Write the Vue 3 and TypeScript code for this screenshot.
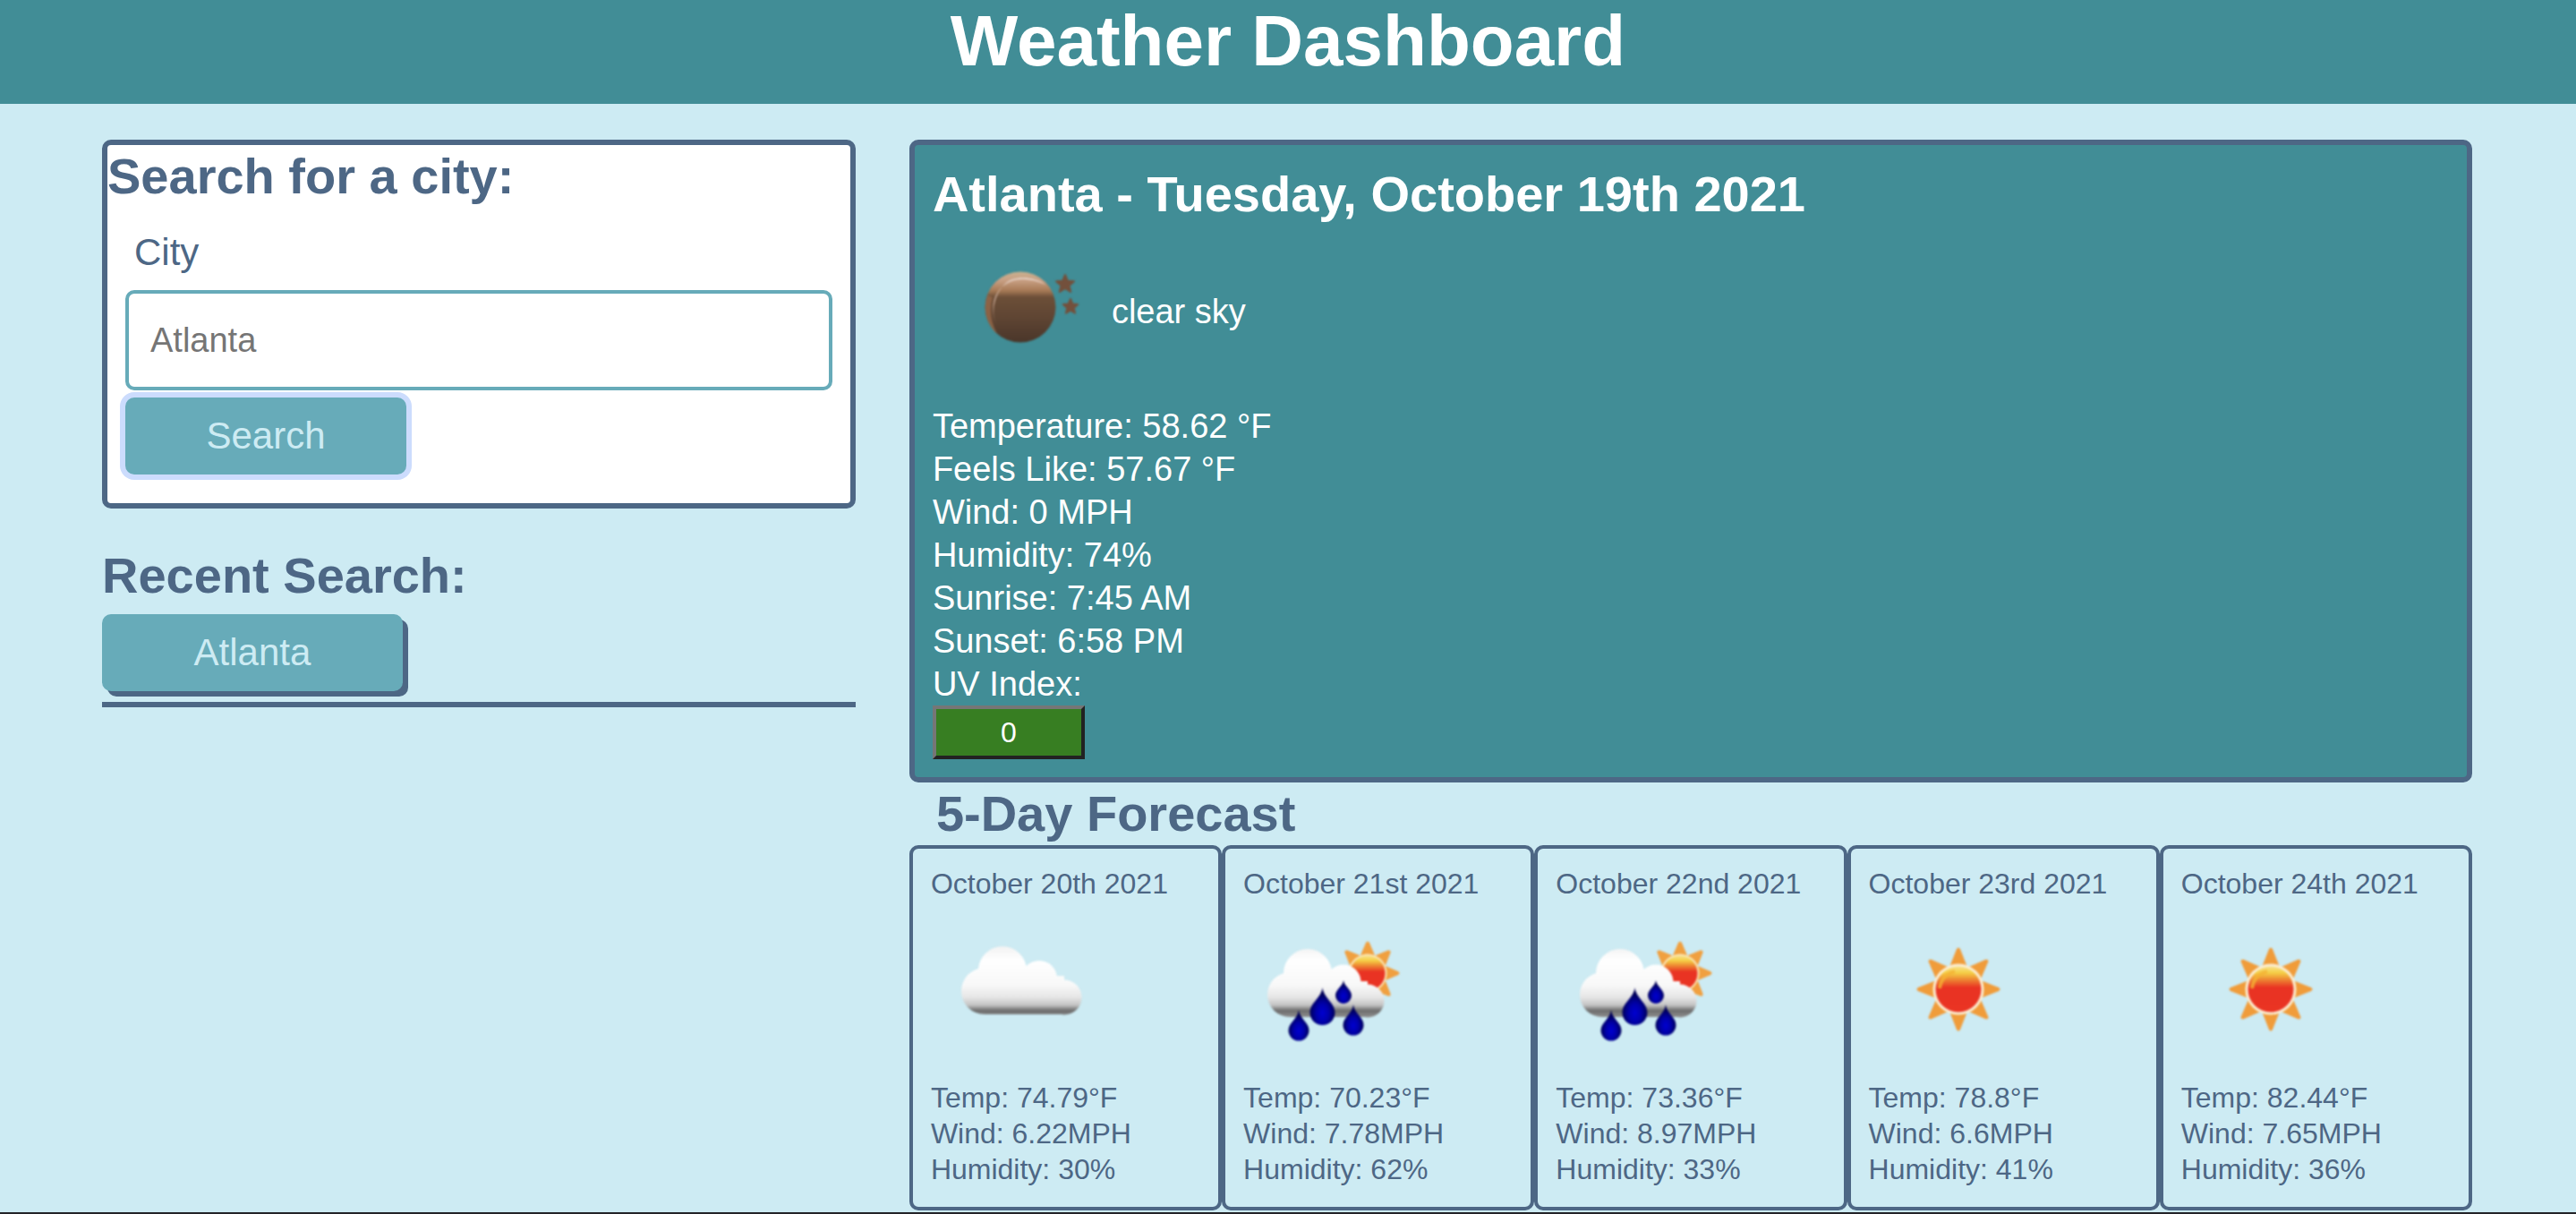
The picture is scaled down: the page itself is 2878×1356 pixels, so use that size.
<script setup lang="ts">
import { ref } from 'vue'

type Icon = 'cloud' | 'rain' | 'sun'

interface Day {
  date: string
  icon: Icon
  temp: string
  wind: string
  humidity: string
}

const city = ref('')
const recent = ref<string[]>(['Atlanta'])

const conditions: string[] = [
  'Temperature: 58.62 °F',
  'Feels Like: 57.67 °F',
  'Wind: 0 MPH',
  'Humidity: 74%',
  'Sunrise: 7:45 AM',
  'Sunset: 6:58 PM',
  'UV Index:',
]

const days: Day[] = [
  { date: 'October 20th 2021', icon: 'cloud', temp: '74.79', wind: '6.22', humidity: '30' },
  { date: 'October 21st 2021', icon: 'rain', temp: '70.23', wind: '7.78', humidity: '62' },
  { date: 'October 22nd 2021', icon: 'rain', temp: '73.36', wind: '8.97', humidity: '33' },
  { date: 'October 23rd 2021', icon: 'sun', temp: '78.8', wind: '6.6', humidity: '41' },
  { date: 'October 24th 2021', icon: 'sun', temp: '82.44', wind: '7.65', humidity: '36' },
]

const rayAngles = [0, 45, 90, 135, 180, 225, 270, 315]

function search() {
  const name = city.value.trim()
  if (name && !recent.value.includes(name)) recent.value.push(name)
}
</script>

<template>
  <div class="page">
    <header class="banner">
      <h1>Weather Dashboard</h1>
    </header>

    <main class="layout">
      <aside class="sidebar">
        <form class="search-card" @submit.prevent="search">
          <h2>Search for a city:</h2>
          <div class="fields">
            <label for="city">City</label>
            <input id="city" v-model="city" type="text" placeholder="Atlanta" autocomplete="off" />
            <button class="btn btn-search" type="submit">Search</button>
          </div>
        </form>

        <section class="recent">
          <h2>Recent Search:</h2>
          <div class="recent-list">
            <button v-for="name in recent" :key="name" class="btn btn-recent" type="button">{{ name }}</button>
          </div>
        </section>
      </aside>

      <div class="results">
        <section class="current">
          <h2>Atlanta - Tuesday, October 19th 2021</h2>
          <div class="sky">
            <svg class="icon" viewBox="0 0 200 200" aria-hidden="true">
              <defs>
                <linearGradient id="moon-body" x1="0" y1="0" x2="0" y2="1">
                  <stop offset="0" stop-color="#c9b08f" />
                  <stop offset="0.12" stop-color="#c9a084" />
                  <stop offset="0.27" stop-color="#a67955" />
                  <stop offset="0.36" stop-color="#6c4f38" />
                  <stop offset="0.65" stop-color="#5f4533" />
                  <stop offset="1" stop-color="#4a362a" />
                </linearGradient>
                <linearGradient id="moon-rim" x1="0" y1="1" x2="0.5" y2="0">
                  <stop offset="0" stop-color="#8a6247" stop-opacity="0.2" />
                  <stop offset="0.45" stop-color="#cfae9b" />
                  <stop offset="1" stop-color="#eee0d8" />
                </linearGradient>
              </defs>
              <circle cx="98" cy="91" r="39.5" fill="url(#moon-body)" />
              <path d="M61 78 A39.5 39.5 0 0 0 72 121 Q61 100 67 80Z" fill="#96694a" opacity="0.8" />
              <path d="M72 113 C62 93 68 70 88 62 C98 58 112 59 126 66 C114 57 92 56 82 64 C68 76 65 98 72 113Z" fill="url(#moon-rim)" />
              <g fill="#73503c" stroke="#73503c" stroke-width="2" stroke-linejoin="round">
                <path d="M148 55l2.800 6.700 7.200.6-5.500 4.700 1.700 7-6.200-3.800-6.200 3.800 1.700-7-5.500-4.700 7.200-.6z" />
                <path d="M154 82l2.300 5.500 5.900.5-4.500 3.900 1.400 5.800-5.100-3.100-5.100 3.100 1.400-5.800-4.500-3.900 5.900-.5z" />
              </g>
            </svg>
            <span>clear sky</span>
          </div>
          <ul class="lines">
            <li v-for="line in conditions" :key="line">{{ line }}</li>
          </ul>
          <button class="uv" type="button">0</button>
        </section>

        <h2 class="forecast-title">5-Day Forecast</h2>
        <section class="forecast">
          <article v-for="(day, i) in days" :key="day.date" class="day">
            <h3>{{ day.date }}</h3>
            <svg class="icon" viewBox="0 0 200 200" aria-hidden="true">
              <defs>
                <linearGradient :id="`sun-${i}`" x1="0" y1="0" x2="0" y2="1">
                  <stop offset="0" stop-color="#f8e08a" />
                  <stop offset="0.14" stop-color="#f5cf45" />
                  <stop offset="0.28" stop-color="#ee8a33" />
                  <stop offset="0.46" stop-color="#e93323" />
                  <stop offset="1" stop-color="#ea3423" />
                </linearGradient>
                <linearGradient :id="`cloud-${i}`" gradientUnits="userSpaceOnUse" x1="0" y1="51" x2="0" y2="130">
                  <stop offset="0" stop-color="#f2f2f2" />
                  <stop offset="0.2" stop-color="#ffffff" />
                  <stop offset="0.55" stop-color="#f8f8f8" />
                  <stop offset="0.72" stop-color="#e6e6e6" />
                  <stop offset="0.83" stop-color="#c4c4c4" />
                  <stop offset="0.91" stop-color="#6c6c6c" />
                  <stop offset="1" stop-color="#8f8f8f" />
                </linearGradient>
                <radialGradient :id="`drop-${i}`" cx="0.5" cy="0.68" r="0.5">
                  <stop offset="0" stop-color="#0000d0" />
                  <stop offset="0.5" stop-color="#0000aa" />
                  <stop offset="1" stop-color="#000058" />
                </radialGradient>
              </defs>

              <g v-if="day.icon === 'cloud'" :fill="`url(#cloud-${i})`">
                <circle cx="80" cy="78" r="27" />
                <circle cx="60" cy="101" r="26" />
                <circle cx="121" cy="87" r="20" />
                <circle cx="149" cy="108" r="19.5" />
                <rect x="60" y="84" width="89" height="43" />
              </g>

              <g v-else-if="day.icon === 'rain'">
                <path
                  v-for="a in rayAngles"
                  :key="a"
                  d="M131 61 L137 47 Q139 44 141 47 L147 61Z"
                  fill="#f0a040"
                  :transform="`rotate(${a} 139 81)`"
                />
                <circle cx="139" cy="81" r="21.5" fill="#fbe6b4" />
                <circle cx="139" cy="81" r="19.5" :fill="`url(#sun-${i})`" />
                <g :fill="`url(#cloud-${i})`">
                  <circle cx="72" cy="81" r="27" />
                  <circle cx="52" cy="105" r="25" />
                  <circle cx="112" cy="91" r="19.5" />
                  <circle cx="139" cy="112" r="18.5" />
                  <rect x="52" y="90" width="87" height="40" />
                </g>
                <g :fill="`url(#drop-${i})`">
                  <path d="M88.500 97 C90 109 102.500 114 102.500 125 A14 14 0 0 1 74.500 125 C74.500 114 87 109 88.500 97Z" />
                  <path d="M112 89 C113 96 121 99 121 106 A9 9 0 0 1 103 106 C103 99 111 96 112 89Z" />
                  <path d="M62 122 C63 132 73.500 136 73.500 145 A11.500 11.500 0 0 1 50.500 145 C50.500 136 61 132 62 122Z" />
                  <path d="M123 116 C124 126 134.500 130 134.500 139 A11.500 11.500 0 0 1 111.500 139 C111.500 130 122 126 123 116Z" />
                </g>
              </g>

              <g v-else>
                <path
                  v-for="a in rayAngles"
                  :key="a"
                  d="M90.500 73 L98 54 Q100 51 102 54 L109.500 73Z"
                  fill="#f09c3a"
                  :transform="`rotate(${a} 100 99)`"
                />
                <circle cx="100" cy="99" r="28.500" fill="#fbeed2" />
                <circle cx="100" cy="99" r="25.500" :fill="`url(#sun-${i})`" />
                <path d="M79 98 Q81 83 96 79" fill="none" stroke="#f4b335" stroke-width="4" opacity="0.8" />
              </g>
            </svg>
            <p>Temp: {{ day.temp }}°F</p>
            <p>Wind: {{ day.wind }}MPH</p>
            <p>Humidity: {{ day.humidity }}%</p>
          </article>
        </section>
      </div>
    </main>
  </div>
</template>

<style>
body {
  margin: 0;
  background: #cdebf3;
}
</style>

<style scoped>
.page {
  box-sizing: border-box;
  min-height: 100vh;
  border-bottom: 2px solid #242428;
  background: #cdebf3;
  color: #4d6785;
  font-family: 'Liberation Sans', Arial, sans-serif;
}

.page *,
.page *::before {
  box-sizing: border-box;
}

h1,
h2,
h3,
p,
ul {
  margin: 0;
  padding: 0;
}

.banner {
  padding-bottom: 24px;
  background: #418d96;
  color: #fff;
  text-align: center;
}

h1 {
  font-size: 80px;
  line-height: 92px;
}

h2 {
  font-size: 56px;
  line-height: 70px;
}

.layout {
  display: grid;
  grid-template-columns: 27fr 56fr;
  gap: 60px;
  align-items: start;
  padding: 40px 116px 2px 114px;
}

.search-card {
  border: 6px solid #4d6785;
  border-radius: 10px;
  background: #fff;
}

.fields {
  display: flex;
  flex-direction: column;
  padding: 24px 20px 32px;
}

label {
  margin-bottom: 16px;
  padding-left: 10px;
  font-size: 42px;
  line-height: 52px;
}

input {
  width: 100%;
  height: 112px;
  margin-bottom: 8px;
  padding: 0 24px;
  border: 4px solid #67abb9;
  border-radius: 10px;
  background: #fff;
  color: #4d6785;
  font-family: inherit;
  font-size: 38px;
}

input::placeholder {
  color: #757575;
  opacity: 1;
}

.btn {
  height: 86px;
  padding: 0;
  border: 0;
  border-radius: 10px;
  background: #67abb9;
  color: #cdebf3;
  font-family: inherit;
  font-size: 42px;
}

.btn-search {
  width: 314px;
  box-shadow: 0 0 0 6px #ccdcfd;
}

.recent {
  margin-top: 40px;
  border-bottom: 6px solid #4d6785;
}

.recent-list {
  display: flex;
  flex-direction: column;
  align-items: flex-start;
  gap: 16px;
  padding: 8px 0 12px;
}

.btn-recent {
  width: 336px;
  box-shadow: 6px 6px 0 #4d6785;
}

.current {
  padding: 20px;
  border: 6px solid #4d6785;
  border-radius: 10px;
  background: #418d96;
  color: #fff;
  font-size: 38px;
  line-height: 48px;
}

.sky {
  display: flex;
  align-items: center;
}

.sky span {
  padding-bottom: 8px;
}

.icon {
  display: block;
  width: 200px;
  height: 200px;
  filter: blur(1px);
}

.lines {
  list-style: none;
}

.uv {
  display: block;
  width: 170px;
  height: 60px;
  padding: 0;
  border: 4px solid;
  border-color: #767676 #222 #222 #767676;
  background: #377e22;
  color: #fff;
  font-family: inherit;
  font-size: 32px;
}

.forecast-title {
  padding-left: 30px;
}

.forecast {
  display: grid;
  grid-template-columns: repeat(5, 1fr);
}

.day {
  padding: 20px 20px 22px;
  border: 4px solid #4d6785;
  border-radius: 10px;
  font-size: 32px;
  line-height: 40px;
}

h3 {
  font-size: 32px;
  font-weight: 400;
  line-height: 38px;
}
</style>
